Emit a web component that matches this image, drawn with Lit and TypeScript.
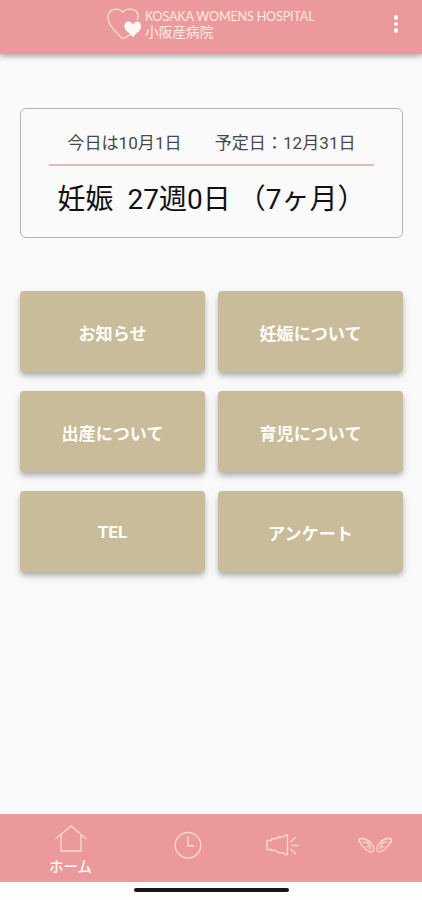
import { LitElement, html, css, svg } from "lit";
import { customElement } from "lit/decorators.js";

const MENU = ["お知らせ", "妊娠について", "出産について", "育児について", "TEL", "アンケート"];

const wing = () => svg`
  <path stroke-width="2" d="M3 13C.5 12 .5 9.500 2.500 8.800 5.500 8 10 10.500 12.500 13" />
  <path stroke-width="1.300" d="M12.500 13C15.500 16 16.500 19 15 21.500 13 23 10.500 22 10 20.500 8 20.500 7 19.500 6.500 17.500 4.500 17 3 15.500 3 13M5 12.500C8 12 10.500 13.500 12.500 16.500M8.500 17.500C10.500 15.500 13 17.500 12 19.500" />
`;

const icons = {
  home: svg`<path d="M1.500 15 17 2 32.500 15M7 10.500V27H27V10.500" />`,
  clock: svg`<circle cx="17" cy="16.300" r="12.800" /><path d="M17 7.300V16.800H23.500" />`,
  horn: svg`<path d="M2 11.500H6.500V10L11 9.500 14 8 19 7.500 20.500 6H22.500V25.500H20.500L18.500 24 13 23.500 10 21.500H6.500V20.500H2ZM25.500 13 31 8M26.500 16.500H33.500M25.500 20 31 25" />`,
  wings: svg`<g transform="translate(0 .8)">${wing()}<g transform="translate(34.500 0) scale(-1 1)">${wing()}</g></g>`,
};

@customElement("app-root")
export class AppRoot extends LitElement {
  static styles = css`
    :host {
      display: flex;
      flex-direction: column;
      height: 900px;
      background: #fafafa;
      font-family: Roboto, "Noto Sans CJK JP", sans-serif;
      color: #111;
      overflow: hidden;
    }
    header {
      height: 54px;
      flex: none;
      display: flex;
      background: #eb999c;
      box-shadow: 0 2px 6px rgba(0, 0, 0, 0.36);
      color: #fdeae0;
    }
    .heart {
      width: 36px;
      height: 36px;
      margin: 6px 0 0 106px;
      flex: none;
    }
    .brand {
      margin: 9px 0 0 3px;
      width: 172px;
      white-space: nowrap;
    }
    .en {
      font: 400 12.500px/15px Lato, sans-serif;
      letter-spacing: -0.120px;
    }
    .jp {
      font: 400 13.700px/15px Lato, "Noto Sans CJK JP", sans-serif;
    }
    .more {
      width: 6px;
      margin: 15px 0 0 76.500px;
      display: flex;
      flex-direction: column;
      gap: 2px;
    }
    .more i {
      width: 4.600px;
      height: 4.600px;
      border-radius: 50%;
      background: #fff8f4;
    }
    main {
      flex: 1;
      padding: 54px 19px 0 20px;
    }
    .card {
      box-sizing: border-box;
      height: 130px;
      border: 1px solid #b4b4b4;
      border-radius: 6px;
      padding: 22px 28px 0;
    }
    .dates {
      display: flex;
      justify-content: center;
      gap: 33px;
      height: 35px;
      box-sizing: border-box;
      border-bottom: 2px solid #eeb4b9;
      font-size: 17.100px;
      line-height: 25px;
      font-weight: 400;
      color: #484848;
      white-space: nowrap;
    }
    .week {
      height: 68px;
      line-height: 67px;
      font-size: 28px;
      text-align: center;
      white-space: pre;
      font-weight: 400;
    }
    .grid {
      margin-top: 53px;
      display: grid;
      grid-template-columns: 185px 185px;
      grid-auto-rows: 81px;
      gap: 19px 13px;
    }
    button {
      border: 0;
      padding: 5px 0 0;
      border-radius: 4px;
      background: #c9bc9a;
      color: #fffdfa;
      font: 700 17.100px/24px Roboto, "Noto Sans CJK JP", sans-serif;
      box-shadow: 0 4px 5px -1px rgba(0, 0, 0, 0.2), 0 4px 9px rgba(0, 0, 0, 0.16);
    }
    button.latin {
      padding-top: 0;
    }
    nav {
      height: 68px;
      flex: none;
      display: grid;
      grid-template-columns: 141fr 94fr 93fr 94fr;
      background: #eb999c;
    }
    .tab {
      display: flex;
      flex-direction: column;
      align-items: center;
      padding-top: 15px;
    }
    .tab.on {
      padding-top: 10px;
    }
    .tab svg {
      width: 34px;
      height: 32px;
      fill: none;
      stroke: #fad7c9;
      stroke-width: 1.400;
    }
    .tab.on svg {
      height: 30px;
    }
    .tab span {
      color: #fff8f4;
      font: 500 14.500px/23px "Noto Sans CJK JP", sans-serif;
    }
    footer {
      height: 18px;
      flex: none;
      background: #fefefe;
      display: flex;
      justify-content: center;
      align-items: flex-start;
    }
    footer i {
      width: 155px;
      height: 4px;
      margin-top: 6px;
      border-radius: 2px;
      background: #151818;
    }
  `;

  render() {
    return html`
      <header>
        <svg class="heart" viewBox="0 0 36 36">
          <path d="M17 6.500C13 1 2 2 2 11.500 2 20 10 25 14 30.500Q17 34 20 31L25 28M17 6.500C20 1.500 31 2 32 9Q32.500 11 31.500 14" fill="none" stroke="#fbdcd0" stroke-width="1.300" />
          <path d="M27 18.500C24 13 17.500 15.500 18.500 21.500 19.500 26 25 27 27 31.500 29 27 34.500 26 35 21.500 36 15.500 30 13 27 18.500Z" fill="#fffaf6" />
        </svg>
        <div class="brand">
          <div class="en">KOSAKA WOMENS HOSPITAL</div>
          <div class="jp">小阪産病院</div>
        </div>
        <div class="more"><i></i><i></i><i></i></div>
      </header>
      <main>
        <section class="card">
          <div class="dates"><span>今日は10月1日</span><span>予定日：12月31日</span></div>
          <div class="week">妊娠  27週0日 （7ヶ月）</div>
        </section>
        <div class="grid">
          ${MENU.map((label) => html`<button class=${label === "TEL" ? "latin" : ""}>${label}</button>`)}
        </div>
      </main>
      <nav>
        <div class="tab on"><svg viewBox="0 0 34 30">${icons.home}</svg><span>ホーム</span></div>
        <div class="tab"><svg viewBox="0 0 34 32">${icons.clock}</svg></div>
        <div class="tab"><svg viewBox="0 0 34 32">${icons.horn}</svg></div>
        <div class="tab"><svg viewBox="0 0 34 32">${icons.wings}</svg></div>
      </nav>
      <footer><i></i></footer>
    `;
  }
}
